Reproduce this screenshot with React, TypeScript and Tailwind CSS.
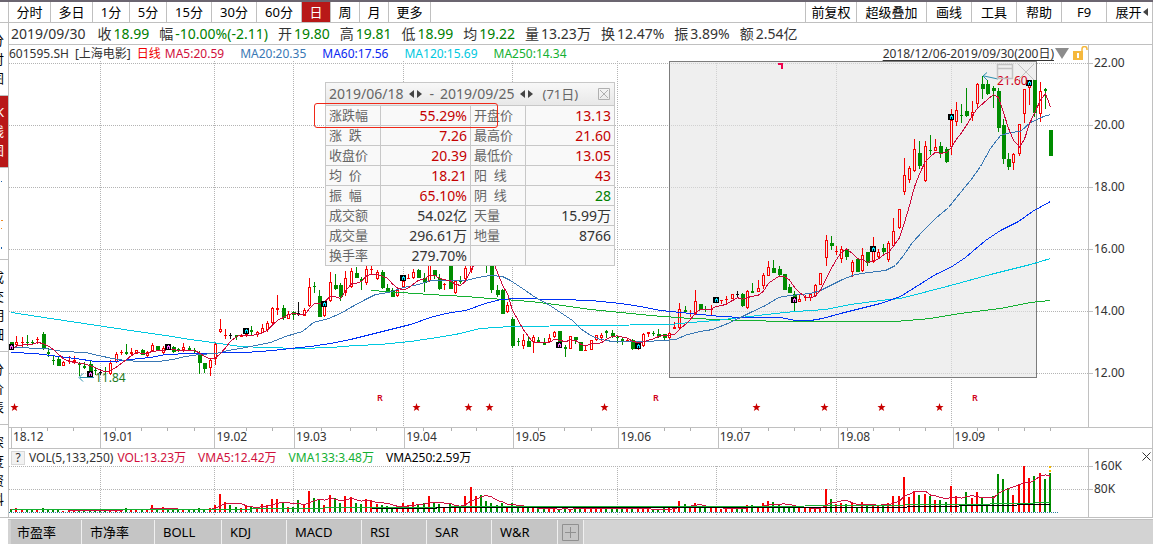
import { useState } from 'react';

type Tone = 'r' | 'g' | 'k';

type Candle = {
  x: number;
  tone: Tone;
  high: number;
  top: number;
  bottom: number;
  low: number;
};

type Point = [number, number];

const STEP = 5.22;
const FIRST_X = 11.2;
const BASELINE = 512;

const toneColor: Record<Tone, string> = { r: '#f80000', g: '#008c00', k: '#111111' };

/* tone, high, body top, body bottom, low: one entry per trading day */
const candleSource = `
g 342 342 349 349,r 336 342 345 346,r 337 342 343 347,g 335 342 343 346,g 340 342 343 344,
r 337 339 340 344,g 332 334 349 350,g 348 352 354 357,g 356 360 361 365,g 357 359 366 366,
r 361 362 366 366,r 356 361 362 364,r 356 360 362 364,g 362 363 365 376,g 362 366 368 369,
g 361 364 372 373,g 368 370 371 375,k 369 372 373 375,g 367 371 372 374,r 360 363 374 375,
r 352 354 362 363,r 350 352 353 355,g 344 352 354 355,r 348 352 354 356,r 350 350 354 354,
g 349 350 355 355,r 351 352 356 357,r 343 345 351 352,g 346 346 350 350,r 346 348 353 355,
g 346 346 350 350,g 346 347 352 353,g 348 349 351 352,r 343 347 350 352,g 346 348 350 351,
g 348 350 351 353,g 351 354 363 374,g 363 363 369 373,r 358 360 368 376,r 343 344 359 365,
r 319 329 332 333,r 329 335 336 339,k 333 335 336 339,g 335 335 337 340,r 335 335 337 337,
r 330 334 336 337,g 326 330 332 335,r 331 332 335 337,r 324 328 333 333,r 321 323 330 332,
r 307 308 323 325,r 295 308 310 315,g 305 308 318 320,r 311 314 319 319,g 311 312 315 320,
k 302 313 315 316,r 308 310 316 316,r 278 287 306 307,g 282 286 287 293,g 290 296 317 317,
r 301 306 316 317,r 272 282 301 302,g 274 285 289 290,g 283 285 297 301,r 271 278 293 296,
r 268 271 287 288,g 267 273 278 278,g 277 279 281 290,r 266 269 283 285,r 264 269 270 275,
r 270 272 279 280,g 270 272 288 289,g 284 288 291 292,g 288 290 297 297,r 287 290 296 297,
r 276 281 287 288,r 274 278 279 279,r 269 272 278 279,g 269 270 278 278,g 273 278 283 292,
r 262 264 281 282,g 270 270 276 279,g 274 278 289 290,r 283 284 285 290,g 262 264 289 289,
r 280 281 293 294,g 276 281 282 284,r 266 268 279 281,r 222 222 270 273,r 245 250 258 263,
g 246 255 262 264,g 250 255 262 273,g 258 266 290 293,g 285 290 295 297,g 289 290 314 314,
r 302 305 312 313,g 317 319 346 348,g 338 341 342 346,r 334 340 346 349,g 336 341 347 347,
r 335 337 342 353,g 337 340 342 342,g 338 343 345 345,r 334 338 342 342,r 331 332 337 338,
g 331 331 342 348,g 345 347 349 357,r 336 336 349 349,g 337 337 340 344,g 342 342 351 351,
r 345 350 351 351,r 340 340 350 350,r 335 335 340 341,r 333 335 338 341,g 330 331 333 338,
g 330 333 336 338,g 336 337 338 343,g 338 339 341 345,r 338 340 341 342,g 339 340 349 350,
r 342 343 348 350,r 333 334 346 347,r 332 332 334 337,g 331 333 334 336,g 329 334 337 338,
g 334 334 338 340,r 332 333 338 339,r 322 327 329 329,r 303 309 328 329,g 306 310 312 313,
r 310 313 314 317,r 290 301 314 315,g 304 304 310 310,g 306 309 310 312,r 305 309 310 316,
r 298 298 302 303,r 300 300 301 304,r 296 299 300 305,r 294 294 299 299,k 291 294 295 297,
g 293 294 306 307,r 290 291 308 309,g 283 291 293 293,r 280 288 292 292,r 273 275 286 289,
r 261 267 276 276,g 260 268 273 273,g 266 269 275 276,g 274 274 290 290,g 284 287 293 293,
g 291 294 303 311,r 295 299 302 302,r 295 297 298 301,r 293 294 298 301,r 284 285 296 297,
r 273 273 285 285,r 235 240 258 266,g 236 243 246 250,r 246 251 252 255,r 246 249 259 263,
g 249 249 257 260,r 260 262 272 277,g 258 259 272 272,r 248 255 271 272,g 252 252 263 266,
r 237 250 262 263,r 249 252 257 258,g 244 248 252 255,r 241 243 260 262,r 218 231 246 247,
r 209 209 228 229,r 158 175 192 195,r 166 168 180 183,r 139 149 171 172,g 141 153 166 169,
r 141 146 181 182,g 135 150 151 155,r 139 147 151 151,g 142 146 154 158,g 147 149 162 163,
r 109 120 147 155,r 102 110 122 126,g 104 115 116 123,g 88 111 116 117,r 101 112 116 121,
r 83 84 104 107,g 76 84 89 99,g 80 84 94 95,g 86 88 91 108,g 88 91 128 132,
g 119 125 159 164,g 153 159 167 170,r 153 154 163 170,r 124 124 154 156,r 89 89 114 123,
r 80 82 88 105,g 80 80 113 117,r 82 91 114 122,g 88 89 91 109,g 130 130 156 156`;

const volumes = [
  3, 4, 3, 3, 3, 3, 4, 3, 3, 3, 1, 2, 3, 2, 2, 2, 2, 2, 2, 2, 3, 3, 4, 3, 3, 3, 3, 7, 3, 5, 3, 3, 3, 3, 3, 2, 4, 3, 4, 7,
  18, 10, 7, 5, 4, 7, 5, 5, 8, 7, 13, 13, 10, 5, 5, 12, 7, 21, 14, 13, 7, 17, 14, 9, 16, 15, 9, 8, 13, 12, 8, 7, 6, 5, 5, 9,
  7, 10, 8, 9, 16, 9, 8, 5, 8, 5, 5, 16, 25, 16, 17, 11, 9, 7, 9, 5, 9, 6, 4, 4, 4, 3, 4, 3, 4, 3, 4, 3, 4, 4,
  4, 3, 4, 4, 4, 4, 4, 4, 4, 4, 4, 3, 3, 3, 3, 4, 4, 4, 11, 8, 5, 9, 6, 5, 4, 5, 3, 4, 4, 4, 4, 7, 7, 5, 9, 11,
  10, 7, 6, 6, 5, 4, 4, 4, 3, 5, 23, 13, 8, 9, 8, 10, 5, 10, 8, 6, 7, 8, 9, 16, 16, 35, 15, 21, 17, 18, 16, 12, 12, 10, 26, 16,
  8, 20, 14, 20, 14, 8, 16, 38, 33, 24, 17, 28, 46, 34, 36, 39, 33, 39,
];

const candles: Candle[] = candleSource
  .trim()
  .split(',')
  .map((entry, index) => {
    const [tone, high, top, bottom, low] = entry.trim().split(' ');
    return {
      x: Math.round(FIRST_X + index * STEP),
      tone: tone as Tone,
      high: Number(high),
      top: Number(top),
      bottom: Number(bottom),
      low: Number(low),
    };
  });

function movingAverage(values: number[], size: number) {
  return values.map((_, index) => {
    const part = values.slice(Math.max(0, index - size + 1), index + 1);
    return part.reduce((sum, value) => sum + value, 0) / part.length;
  });
}

const toPoints = (values: number[]): Point[] => values.map((value, index) => [candles[index].x, value]);

const ma5 = toPoints(movingAverage(candles.map((c) => (c.tone === 'r' ? c.top : c.bottom)), 5));
const volumeMa5 = toPoints(movingAverage(volumes, 5).map((value) => BASELINE - value));

const ma20: Point[] = [
  [11, 347], [45, 348], [50, 349], [62, 351], [85, 352], [98, 355], [112, 358], [125, 360], [140, 361], [158, 361], [172, 359],
  [185, 356], [199, 354], [215, 353], [228, 350], [240, 348], [255, 345], [270, 342], [285, 336], [302, 331], [313, 322],
  [328, 318], [340, 313], [352, 306], [365, 299], [375, 294], [388, 292], [403, 287], [418, 284], [430, 280], [465, 280],
  [478, 277], [490, 275], [502, 276], [510, 280], [522, 288], [535, 297], [548, 304], [560, 312], [572, 320], [580, 328],
  [590, 335], [600, 339], [612, 341], [645, 341], [662, 340], [675, 339], [687, 334], [700, 331], [712, 329], [725, 324],
  [738, 318], [750, 312], [765, 305], [778, 297], [790, 295], [810, 293], [820, 290], [830, 285], [842, 279], [855, 274],
  [868, 272], [885, 270], [895, 265], [903, 255], [912, 242], [922, 231], [935, 218], [948, 207], [960, 192], [970, 180],
  [980, 166], [990, 148], [1000, 135], [1010, 132], [1020, 131], [1030, 122], [1043, 116], [1050, 114],
];
const ma60: Point[] = [
  [11, 352], [35, 353], [50, 355], [75, 358], [95, 361], [115, 361], [130, 359], [150, 357], [165, 354], [190, 353], [245, 352],
  [272, 350], [290, 348], [310, 346], [330, 343], [350, 339], [370, 334], [390, 329], [410, 324], [430, 317], [445, 313],
  [465, 310], [485, 303], [500, 299], [515, 298], [560, 299], [590, 300], [620, 303], [640, 306], [660, 310], [680, 312],
  [700, 314], [720, 316], [742, 317], [780, 317], [795, 320], [810, 320], [822, 318], [840, 313], [860, 308], [880, 303],
  [900, 296], [935, 274], [950, 267], [965, 257], [985, 240], [1000, 230], [1018, 221], [1032, 211], [1050, 201],
];
const ma120: Point[] = [
  [11, 312], [50, 318], [90, 324], [130, 330], [165, 335], [190, 339], [212, 342], [240, 346], [265, 347], [300, 348],
  [330, 347], [355, 345], [380, 344], [410, 341], [430, 338], [455, 334], [480, 328], [510, 326], [590, 325], [670, 324],
  [690, 322], [715, 320], [740, 317], [775, 313], [795, 311], [825, 309], [850, 304], [880, 300], [900, 298], [950, 285],
  [990, 274], [1010, 269], [1030, 264], [1050, 258],
];
const ma250: Point[] = [
  [371, 290], [400, 292], [430, 294], [465, 296], [490, 298], [530, 301], [555, 304], [590, 309], [620, 312], [650, 315],
  [690, 318], [720, 319], [740, 320], [790, 321], [895, 321], [930, 318], [960, 313], [1000, 308], [1030, 302], [1050, 300],
];
const volumeMa133: Point[] = [[11, 509], [215, 509], [360, 507], [540, 506], [760, 506], [850, 505], [960, 504], [1020, 503], [1050, 502]];
const volumeMa250: Point[] = [[372, 508], [500, 507], [880, 507], [985, 505], [1050, 504]];

const priceLines = [63, 125, 187, 249, 311, 373];
const monthLines = [100, 214, 293, 403, 512, 617, 716, 836, 951];
const weekTicks = [
  21, 47, 73, 115, 141, 167, 194, 246, 272, 321, 350, 376, 423, 451, 476, 538, 564, 591, 664, 690, 741, 768, 794, 820, 847, 873,
  899, 925, 977, 998, 1024, 1050,
];
const months = [
  { label: '18.12', span: 89 },
  { label: '19.01', span: 114 },
  { label: '19.02', span: 79 },
  { label: '19.03', span: 110 },
  { label: '19.04', span: 109 },
  { label: '19.05', span: 105 },
  { label: '19.06', span: 99 },
  { label: '19.07', span: 120 },
  { label: '19.08', span: 115 },
  { label: '19.09', span: 201 },
];

const dayMarkers: Array<[number, number, string]> = [
  [0, 344, '#ff66ff'], [15, 371, '#ff66ff'], [30, 344, '#ff66ff'], [45, 328, '#00e5ff'], [60, 301, '#00e5ff'],
  [75, 275, '#00e5ff'], [105, 342, '#ff66ff'], [120, 343, '#00e5ff'], [135, 297, '#00e5ff'], [150, 297, '#ff66ff'],
  [165, 246, '#00e5ff'], [180, 114, '#00e5ff'], [195, 80, '#00e5ff'],
];
const stars = [14, 416, 468, 489, 604, 756, 824, 881, 939];
const reports = [380, 656, 975];

const periods = [
  { label: '分时', width: 'w-[42px]' },
  { label: '多日', width: 'w-[42px]' },
  { label: '1分', width: 'w-[37px]' },
  { label: '5分', width: 'w-[37px]' },
  { label: '15分', width: 'w-[45px]' },
  { label: '30分', width: 'w-[45px]' },
  { label: '60分', width: 'w-[45px]' },
  { label: '日', width: 'w-[29px]' },
  { label: '周', width: 'w-[29px]' },
  { label: '月', width: 'w-[29px]' },
  { label: '更多', width: 'w-[42px]' },
];
const tools = [
  { label: '前复权', width: 'w-[51px]' },
  { label: '超级叠加', width: 'w-[70px]' },
  { label: '画线', width: 'w-[45px]' },
  { label: '工具', width: 'w-[45px]' },
  { label: '帮助', width: 'w-[45px]' },
  { label: 'F9', width: 'w-[45px]' },
];

const quotes = [
  { label: '收', value: '18.99', down: true },
  { label: '幅', value: '-10.00%(-2.11)', down: true },
  { label: '开', value: '19.80', down: true },
  { label: '高', value: '19.81', down: true },
  { label: '低', value: '18.99', down: true },
  { label: '均', value: '19.22', down: true },
  { label: '量', value: '13.23万' },
  { label: '换', value: '12.47%' },
  { label: '振', value: '3.89%' },
  { label: '额', value: '2.54亿' },
];

const sideTabs = [
  { label: '分时图', height: 'h-[73px]' },
  { label: 'K线图', height: 'h-[72px]', active: true },
  { label: '', height: 'h-[92px]' },
  { label: '成交明细', height: 'h-[92px]' },
  { label: '分价表', height: 'h-[73px]' },
  { label: '深度资料', height: 'h-[93px]' },
];

const indicators = [
  { label: '市盈率', width: 'w-[71px] pl-1.5' },
  { label: '市净率', width: 'w-[73px] pl-2' },
  { label: 'BOLL', width: 'w-[67px] pl-2' },
  { label: 'KDJ', width: 'w-[65px] pl-2' },
  { label: 'MACD', width: 'w-[75px] pl-2' },
  { label: 'RSI', width: 'w-[65px] pl-2' },
  { label: 'SAR', width: 'w-[65px] pl-2' },
  { label: 'W&R', width: 'w-[66px] pl-2' },
];

type Cell = { label: string; value: string; color: string };
const RED = 'text-[#c40000]';
const GREEN = 'text-[#008000]';
const INK = 'text-[#333]';

const stats: Array<[Cell, Cell]> = [
  [{ label: '涨跌幅', value: '55.29%', color: RED }, { label: '开盘价', value: '13.13', color: RED }],
  [{ label: '涨\u00a0\u00a0跌', value: '7.26', color: RED }, { label: '最高价', value: '21.60', color: RED }],
  [{ label: '收盘价', value: '20.39', color: RED }, { label: '最低价', value: '13.05', color: RED }],
  [{ label: '均\u00a0\u00a0价', value: '18.21', color: RED }, { label: '阳\u00a0\u00a0线', value: '43', color: RED }],
  [{ label: '振\u00a0\u00a0幅', value: '65.10%', color: RED }, { label: '阴\u00a0\u00a0线', value: '28', color: GREEN }],
  [{ label: '成交额', value: '54.02亿', color: INK }, { label: '天量', value: '15.99万', color: INK }],
  [{ label: '成交量', value: '296.61万', color: INK }, { label: '地量', value: '8766', color: INK }],
  [{ label: '换手率', value: '279.70%', color: INK }, { label: '', value: '', color: INK }],
];

function Line({ points, color }: { points: Point[]; color: string }) {
  return (
    <polyline
      points={points.map(([x, y]) => `${x + 0.5},${y + 0.5}`).join(' ')}
      fill="none"
      stroke={color}
      strokeWidth="1"
      shapeRendering="crispEdges"
    />
  );
}

function CandleShape({ candle }: { candle: Candle }) {
  const { x, tone, high, top, bottom, low } = candle;
  const color = toneColor[tone];
  const height = Math.max(1, bottom - top);
  const hollow = tone === 'r' && height > 2;
  const selected = x > 669 && x < 1037;

  return (
    <g>
      <rect x={x} y={high} width="1" height={Math.max(1, low - high)} fill={color} />
      <rect x={x - 1} y={top} width={tone === 'g' && height > 2 ? 4 : 3} height={height} fill={color} />
      {hollow ? <rect x={x} y={top + 1} width="1" height={height - 2} fill={selected ? '#efefef' : '#fff'} /> : null}
    </g>
  );
}

function Stepper() {
  return (
    <svg width="14" height="8" viewBox="0 0 14 8" aria-hidden>
      <path d="M5 0v8L0 4zM8 0v8l5-4z" fill="#444" />
    </svg>
  );
}

function PriceChart() {
  return (
    <svg
      viewBox="9 61 1079 366"
      preserveAspectRatio="none"
      className="block h-[366px] w-full font-['Noto_Sans',sans-serif]"
      role="img"
      aria-label="日线">
      <g stroke="#b4b4b4" strokeDasharray="1 1" shapeRendering="crispEdges">
        {priceLines.map((y) => (
          <line key={y} x1="9" x2="1088" y1={y + 0.5} y2={y + 0.5} />
        ))}
        {monthLines.map((x) => (
          <line key={x} x1={x + 0.5} x2={x + 0.5} y1="61" y2="427" />
        ))}
      </g>

      <rect x="669" y="61" width="368" height="317" fill="#e4e4e4" fillOpacity="0.6" />
      <rect x="669.5" y="61.5" width="367" height="316" fill="none" stroke="#7c7c7c" />
      <path d="M778 63h5v6h-2v-4h-3z" fill="#f0004c" />

      <g shapeRendering="crispEdges">
        {candles.map((candle) => (
          <CandleShape key={candle.x} candle={candle} />
        ))}
      </g>

      <Line points={ma250} color="#14b032" />
      <Line points={ma120} color="#00c8e0" />
      <Line points={ma60} color="#0032f5" />
      <Line points={ma20} color="#3a78b4" />
      <Line points={ma5} color="#cc0a3c" />

      <g shapeRendering="crispEdges">
        {dayMarkers.map(([index, y, color]) => (
          <g key={index}>
            <rect x={candles[index].x - 3} y={y} width="6" height="6" fill="#000" />
            <path d={`M${candles[index].x - 1} ${y + 5}v-3h1v-1h1v1h1v3h-1v-2h-1v2z`} fill={color} />
          </g>
        ))}
      </g>

      <g fill="none" stroke="#2b8fae">
        <path d="M80 377.5h14M83 373.5l-4 4 4 4" />
        <path d="M984 76l14 3M987 72.500l-4 3.500 4 4" />
      </g>
      <text x="95" y="382" fontSize="12" fill="#1c7a1c">11.84</text>
      <text x="997" y="85" fontSize="12" fill="#d00018">21.60</text>

      <g fill="none" stroke="#c2c2c2">
        <path d="M997.500 64.500h15v14h-15zM997.500 68.500h15" strokeWidth="1.500" />
        <path d="M1018 64l16 16M1034 64l-16 16" />
      </g>

      {stars.map((x) => (
        <path key={x} d={`M${x + 0.5} 403l1 3h3l-2.300 2 1 3-2.700-1.800-2.700 1.800 1-3-2.300-2h3z`} fill="#c80000" />
      ))}
      {reports.map((x) => (
        <text
          key={x}
          x={x}
          y="401"
          fontSize="9"
          fontWeight="600"
          textAnchor="middle"
          fill="#d00020"
          className="font-['Noto_Sans',sans-serif]">
          R
        </text>
      ))}
    </svg>
  );
}

function VolumeChart() {
  return (
    <svg viewBox="9 465 1079 52" preserveAspectRatio="none" className="block h-[52px] w-full" role="img" aria-label="VOL">
      <g shapeRendering="crispEdges">
        <g stroke="#b4b4b4" strokeDasharray="1 1">
          <path d="M9 466.500H1088M9 489.500H1088" />
          {monthLines.map((x) => (
            <line key={x} x1={x + 0.5} x2={x + 0.5} y1="466" y2="515" />
          ))}
        </g>
        {candles.map((candle, index) => (
          <rect
            key={candle.x}
            x={candle.x - 1}
            y={BASELINE - volumes[index]}
            width="2"
            height={volumes[index]}
            fill={toneColor[candle.tone === 'k' ? 'g' : candle.tone]}
          />
        ))}
        <path d="M9 512.500H1058" stroke="#2b7f99" strokeDasharray="1 1" />
        <path d="M1050 466v2M1050 470v2" stroke="#f5b800" strokeWidth="2" />
      </g>
      <Line points={volumeMa5} color="#d01040" />
      <Line points={volumeMa133} color="#14b032" />
      <Line points={volumeMa250} color="#000000" />
    </svg>
  );
}

function RangePanel() {
  return (
    <section className="absolute left-[316px] top-[21px] w-[290px] border border-[#c8c8c8] bg-[#f9f9f9]">
      <header className="flex h-[22px] items-center bg-linear-to-b from-[#f8f8f8] to-[#e8e8e8] pl-[3px] pr-1 text-sm/5 text-[#666]">
        <span>2019/06/18</span>
        <button type="button" aria-label="调整开始日期" className="ml-1.5">
          <Stepper />
        </button>
        <span className="ml-1.5">-</span>
        <span className="ml-1.5">2019/09/25</span>
        <button type="button" aria-label="调整结束日期" className="ml-1.5">
          <Stepper />
        </button>
        <span className="ml-2 text-[13px]">(71日)</span>
        <button type="button" aria-label="关闭" className="ml-auto">
          <svg width="12" height="12" viewBox="0 0 12 12" fill="none" stroke="#b0b0b0">
            <path d="M.5.5h11v11H.5zM2 2l8 8M10 2l-8 8" />
          </svg>
        </button>
      </header>
      <table className="w-full table-fixed border-separate border-spacing-0">
        <colgroup>
          <col className="w-[54px]" />
          <col className="w-[90px]" />
          <col className="w-[55px]" />
          <col className="w-[89px]" />
        </colgroup>
        <tbody>
          {stats.map(([left, right]) => (
            <tr key={left.label} className="h-5">
              <th scope="row" className="border-t border-[#c8c8c8] p-0 pl-[3px] text-left text-[13px]/[19px] font-normal text-[#666]">
                {left.label}
              </th>
              <td className={`border-l border-t border-[#c8c8c8] p-0 pr-[3px] text-right text-sm/[19px] ${left.color}`}>{left.value}</td>
              <th scope="row" className="border-l border-t border-[#c8c8c8] p-0 pl-[3px] text-left text-[13px]/[19px] font-normal text-[#666]">
                {right.label}
              </th>
              <td className={`border-l border-t border-[#c8c8c8] p-0 pr-[3px] text-right text-sm/[19px] ${right.color}`}>{right.value}</td>
            </tr>
          ))}
        </tbody>
      </table>
    </section>
  );
}

function AxisLabel({ children }: { children: string }) {
  return (
    <span className="flex items-center gap-[1px] text-xs/4 text-[#333]">
      <i className="h-px w-1 bg-[#c0c0c0]" />
      {children}
    </span>
  );
}

export default function App() {
  const [period, setPeriod] = useState('日');

  return (
    <div className="w-full overflow-hidden bg-white font-['Noto_Sans','Noto_Sans_CJK_SC',sans-serif] text-black">
      <div className="h-[2px] bg-[#6b6570]" />
      <div className="flex">
        <nav className="flex w-[9px] shrink-0 flex-col overflow-hidden border-r border-[#c0c0c0]" aria-label="页面">
          <div className="h-[21px] shrink-0 border-b border-[#c0c0c0]" />
          {sideTabs.map((tab) => (
            <button
              key={tab.height + tab.label}
              type="button"
              aria-label={tab.label || '资讯'}
              className={`flex shrink-0 flex-col items-end justify-center overflow-hidden border-b border-[#c0c0c0] pr-1 text-[13px]/[19px] ${tab.height} ${
                tab.active ? 'bg-[#b81818] text-white' : ''
              }`}>
              {tab.label ? (
                Array.from(tab.label).map((char) => <span key={char}>{char}</span>)
              ) : (
                <svg width="3" height="72" viewBox="0 0 3 72" className="shrink-0" aria-hidden>
                  <path d="M0 3h1v1H0zM0 69h1v2H0z" fill="#1a5fa8" />
                  <path d="M0 42h2v1H0zM0 50h1v1H0z" fill="#f08a20" />
                </svg>
              )}
            </button>
          ))}
        </nav>

        <div className="min-w-0 flex-1 border-r border-[#c0c0c0]">
          <div className="flex h-[21px] border-b border-[#c0c0c0] text-[13px]/5">
            {periods.map(({ label, width }) => (
              <button
                key={label}
                type="button"
                onClick={() => setPeriod(label)}
                className={`shrink-0 border-r border-[#c0c0c0] ${width} ${label === period ? 'bg-[#b81818] text-white' : ''}`}>
                {label}
              </button>
            ))}
            <div className="ml-auto flex border-l border-[#c0c0c0]">
              {tools.map(({ label, width }) => (
                <button key={label} type="button" className={`shrink-0 border-r border-[#c0c0c0] text-center ${width}`}>
                  {label}
                </button>
              ))}
              <button type="button" className="flex w-[45px] items-center justify-center gap-px pl-1">
                展开
                <svg width="5" height="8" viewBox="0 0 5 8" aria-hidden>
                  <path d="M5 0v8L0 4z" fill="#444" />
                </svg>
              </button>
            </div>
          </div>

          <div className="flex h-[22px] items-center whitespace-nowrap border-b border-[#c0c0c0] pl-[2px] text-sm/5 text-[#333]">
            <span className="mr-3">2019/09/30</span>
            <div className="flex gap-2.5">
              {quotes.map(({ label, value, down }) => (
                <span key={label} className="flex items-center gap-[2px]">
                  <span>{label}</span>
                  <span className={down ? 'text-[#008000]' : ''}>{value}</span>
                </span>
              ))}
            </div>
          </div>

          <div className="flex">
            <div className="min-w-0 flex-1">
              <div className="flex h-4 items-center whitespace-nowrap pt-[2px] text-xs/4 text-[#333]">
                <span>601595.SH</span>
                <span className="ml-1.5">[上海电影]</span>
                <span className="ml-1.5 text-[#f00000]">日线</span>
                <span className="ml-1 text-[#d0103c]">MA5:20.59</span>
                <span className="ml-4 text-[#3a78b4]">MA20:20.35</span>
                <span className="ml-4 text-[#0a28f0]">MA60:17.56</span>
                <span className="ml-4 text-[#00c8e0]">MA120:15.69</span>
                <span className="ml-4 text-[#14b032]">MA250:14.34</span>
                <a href="#range" className="ml-auto underline underline-offset-2">
                  2018/12/06-2019/09/30(200日)
                </a>
                <svg width="34" height="16" viewBox="0 0 34 16" aria-hidden>
                  <path d="M1 2h14L8 13z" fill="#8c8c8c" />
                  <path d="M19 5h10v9H19z" fill="#f5b83d" />
                  <path d="M28 5V3a2.500 2.500 0 0 1 5 0v1" fill="none" stroke="#f5b83d" strokeWidth="1.500" />
                  <path d="M23 7h2v5h-2z" fill="#fff" />
                </svg>
              </div>
              <div className="relative">
                <PriceChart />
                <RangePanel />
                <div className="absolute left-[305px] top-[42px] h-[25px] w-[184px] rounded-[3px] border border-[#f02818]" />
              </div>
            </div>
            <div className="w-16 shrink-0 border-l border-[#c0c0c0] pt-2.5">
              {['22.00', '20.00', '18.00', '16.00', '14.00', '12.00'].map((price) => (
                <div key={price} className="h-[62px]">
                  <AxisLabel>{price}</AxisLabel>
                </div>
              ))}
            </div>
          </div>

          <div className="relative flex h-[22px] border-y border-[#c0c0c0] pl-[2px]">
            {months.map(({ label, span }) => (
              <span
                key={label}
                className="min-w-0 basis-0 border-l border-[#c0c0c0] pl-px text-xs/[17px] text-[#333]"
                style={{ flexGrow: span }}>
                {label}
              </span>
            ))}
            <svg viewBox="9 0 1143 4" preserveAspectRatio="none" className="absolute inset-x-0 top-0 h-1 w-full" aria-hidden>
              {weekTicks.map((x) => (
                <rect key={x} x={x} y="0" width="1" height="3" fill="#b0b0b0" />
              ))}
            </svg>
          </div>

          <div className="flex border-b border-[#c0c0c0]">
            <div className="min-w-0 flex-1">
              <div className="flex h-4 items-center gap-3 whitespace-nowrap pl-[2px] pt-[2px] text-xs/4 text-[#333]">
                <span className="flex items-center gap-1">
                  <button type="button" aria-label="指标说明" className="h-[14px] w-[14px] border border-[#d8d8d8] bg-[#f2f2f2] text-xs/3">
                    ?
                  </button>
                  <span>VOL(5,133,250)</span>
                  <span className="text-[#d0103c]">VOL:13.23万</span>
                </span>
                <span className="text-[#d0103c]">VMA5:12.42万</span>
                <span className="text-[#14b032]">VMA133:3.48万</span>
                <span className="text-black">VMA250:2.59万</span>
              </div>
              <VolumeChart />
            </div>
            <div className="relative w-16 shrink-0 border-l border-[#c0c0c0] pt-[9px]">
              <div className="h-[23px]">
                <AxisLabel>160K</AxisLabel>
              </div>
              <AxisLabel>80K</AxisLabel>
              <button type="button" aria-label="关闭指标" className="absolute right-[1px] top-[3px]">
                <svg width="9" height="9" viewBox="0 0 9 9" stroke="#333">
                  <path d="M.5.5l8 8M8.500.5l-8 8" />
                </svg>
              </button>
            </div>
          </div>
        </div>
      </div>

      <div className="mt-px pl-2">
        <div className="flex h-[25px] border-t border-[#c0c0c0] bg-[#d3d3d3] pl-[3px] text-[13px]/6">
          {indicators.map(({ label, width }) => (
            <button key={label} type="button" className={`shrink-0 border-r border-[#f0f0f0] bg-[#c5c5c5] text-left ${width}`}>
              {label}
            </button>
          ))}
          <button type="button" aria-label="添加指标" className="flex w-[26px] items-center justify-center border-r border-[#f0f0f0] bg-[#c5c5c5]">
            <svg width="17" height="17" viewBox="0 0 17 17" fill="none" stroke="#909090">
              <path d="M.5.5h16v16H.5zM8.500 3v11M3 8.500h11" />
            </svg>
          </button>
        </div>
      </div>
    </div>
  );
}
